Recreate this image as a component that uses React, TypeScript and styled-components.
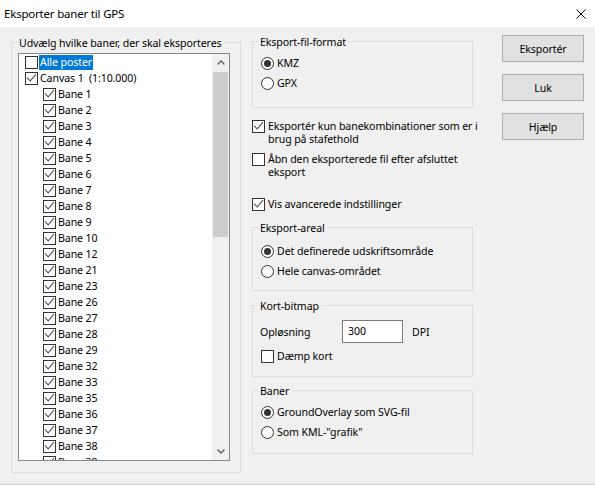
import React from 'react'
import styled, { createGlobalStyle } from 'styled-components'

const FONT = `'Noto Sans', 'Segoe UI', sans-serif`

const GlobalStyle = createGlobalStyle`
  html, body {
    margin: 0;
    padding: 0;
    background: #fff;
  }
  body {
    font-family: ${FONT};
    font-size: 10.6px;
    letter-spacing: -0.1px;
    color: #000;
  }
`

const Window = styled.div`
  width: 595px;
  height: 486px;
  display: flex;
  flex-direction: column;
  background: #fff;
  overflow: hidden;
`

const TitleBar = styled.div`
  height: 27px;
  flex: none;
  display: flex;
  align-items: center;
  justify-content: space-between;
  padding-left: 4px;
  box-sizing: border-box;
  background: #fff;
  font-size: 11.5px;
  letter-spacing: -0.2px;
`

const CloseButton = styled.div`
  width: 28px;
  height: 27px;
  display: flex;
  align-items: center;
  justify-content: center;
`

const Client = styled.div`
  height: 458px;
  box-sizing: border-box;
  display: flex;
  align-items: flex-start;
  padding-left: 11px;
  background: #f0f0f0;
  border-bottom: 1px solid #d2d2d2;
`

const Group = styled.div<{ $top: number; $height: number; $pad: string }>`
  position: relative;
  box-sizing: border-box;
  margin-top: ${({ $top }) => $top}px;
  height: ${({ $height }) => $height}px;
  padding: ${({ $pad }) => $pad};
  border: 1px solid #dcdcdc;
  display: flex;
  flex-direction: column;
`

const Caption = styled.span`
  position: absolute;
  top: -8px;
  left: 5px;
  padding: 0 2px;
  line-height: 16px;
  background: #f0f0f0;
  white-space: nowrap;
`

const LeftColumn = styled.div`
  width: 230px;
`

const MiddleColumn = styled.div`
  width: 221px;
  margin-left: 11px;
  display: flex;
  flex-direction: column;
`

const ButtonColumn = styled.div`
  margin-left: 29px;
  margin-top: 8px;
  display: flex;
  flex-direction: column;
  gap: 12px;
`

const Button = styled.div`
  width: 82px;
  height: 27px;
  box-sizing: border-box;
  border: 1px solid #adadad;
  background: #e1e1e1;
  display: flex;
  align-items: center;
  justify-content: center;
`

/* tree list */

const TreeList = styled.div`
  width: 212px;
  height: 408px;
  box-sizing: border-box;
  border: 1px solid #828790;
  background: #fff;
  display: flex;
`

const TreeItems = styled.div`
  flex: 1;
  overflow: hidden;
  display: flex;
  flex-direction: column;
`

const TreeRow = styled.div<{ $level: number }>`
  flex: none;
  height: 16px;
  display: flex;
  align-items: center;
  padding-left: ${({ $level }) => 6 + $level * 18}px;
`

const TreeLabel = styled.span<{ $selected?: boolean }>`
  margin-left: 1px;
  padding: 0 1px;
  line-height: 15px;
  white-space: pre;
  background: ${({ $selected }) => ($selected ? '#0078d7' : 'transparent')};
  color: ${({ $selected }) => ($selected ? '#fff' : '#000')};
`

const ScrollBar = styled.div`
  width: 17px;
  flex: none;
  background: #f0f0f0;
  display: flex;
  flex-direction: column;
`

const ScrollArrow = styled.div`
  height: 17px;
  flex: none;
  display: flex;
  align-items: center;
  justify-content: center;
`

const ScrollTrack = styled.div`
  flex: 1;
`

const ScrollThumb = styled.div`
  margin: 1px 1px 0;
  height: 165px;
  background: #cdcdcd;
`

/* controls */

const Box = styled.span`
  width: 13px;
  height: 13px;
  flex: none;
  box-sizing: border-box;
  border: 1px solid #333;
  background: #fff;
  display: flex;
`

const RadioCircle = styled.span<{ $on?: boolean }>`
  width: 13px;
  height: 13px;
  flex: none;
  box-sizing: border-box;
  border: 1px solid #333;
  border-radius: 50%;
  background: #fff;
  display: flex;
  align-items: center;
  justify-content: center;

  &::after {
    content: '';
    width: 7px;
    height: 7px;
    border-radius: 50%;
    background: ${({ $on }) => ($on ? '#333' : 'transparent')};
  }
`

const RadioRow = styled.div<{ $gap: number }>`
  height: 16px;
  display: flex;
  align-items: center;
  gap: 3px;
  white-space: nowrap;
  & + & {
    margin-top: ${({ $gap }) => $gap}px;
  }
`

const CheckOption = styled.div<{ $top: number }>`
  display: flex;
  align-items: flex-start;
  gap: 3px;
  margin-top: ${({ $top }) => $top}px;
  line-height: 13px;
  white-space: nowrap;
`

const FieldRow = styled.div`
  display: flex;
  align-items: center;
`

const FieldLabel = styled.span`
  width: 82px;
`

const TextInput = styled.div`
  width: 61px;
  height: 23px;
  box-sizing: border-box;
  border: 1px solid #7a7a7a;
  background: #fff;
  padding: 0 0 1px 5px;
  display: flex;
  align-items: center;
`

const Unit = styled.span`
  margin-left: 9px;
`

const InlineCheck = styled.div`
  display: flex;
  align-items: center;
  gap: 3px;
  margin: 6px 0 0 1px;
`

const Check: React.FC<{ checked?: boolean }> = ({ checked }) => (
  <Box>
    {checked && (
      <svg width="11" height="11" viewBox="0 0 11 11">
        <path d="M1 4.6 L4.2 7.9 L10 1.2" fill="none" stroke="#555" strokeWidth="1.1" />
      </svg>
    )}
  </Box>
)

const baneNumbers = [1, 2, 3, 4, 5, 6, 7, 8, 9, 10, 12, 21, 23, 26, 27, 28, 29, 32, 33, 35, 36, 37, 38, 39]

export default function App() {
  return (
    <>
      <GlobalStyle />
      <Window>
        <TitleBar>
          <span>Eksporter baner til GPS</span>
          <CloseButton>
            <svg width="10" height="10" viewBox="0 0 10 10">
              <path d="M0.5 0.5 L9.5 9.5 M9.5 0.5 L0.5 9.5" stroke="#000" strokeWidth="1" />
            </svg>
          </CloseButton>
        </TitleBar>
        <Client>
          <LeftColumn>
            <Group $top={15} $height={431} $pad="10px 0 0 6px">
              <Caption>Udvælg hvilke baner, der skal eksporteres</Caption>
              <TreeList>
                <TreeItems>
                  <TreeRow $level={0}>
                    <Check />
                    <TreeLabel $selected>Alle poster</TreeLabel>
                  </TreeRow>
                  <TreeRow $level={0}>
                    <Check checked />
                    <TreeLabel>{'Canvas 1  (1:10.000)'}</TreeLabel>
                  </TreeRow>
                  {baneNumbers.map(n => (
                    <TreeRow key={n} $level={1}>
                      <Check checked />
                      <TreeLabel>Bane {n}</TreeLabel>
                    </TreeRow>
                  ))}
                </TreeItems>
                <ScrollBar>
                  <ScrollArrow>
                    <svg width="8" height="5" viewBox="0 0 8 5">
                      <path d="M0.5 4.5 L4 1 L7.5 4.5" fill="none" stroke="#606060" strokeWidth="1.4" />
                    </svg>
                  </ScrollArrow>
                  <ScrollTrack>
                    <ScrollThumb />
                  </ScrollTrack>
                  <ScrollArrow>
                    <svg width="8" height="5" viewBox="0 0 8 5">
                      <path d="M0.5 0.5 L4 4 L7.5 0.5" fill="none" stroke="#606060" strokeWidth="1.4" />
                    </svg>
                  </ScrollArrow>
                </ScrollBar>
              </TreeList>
            </Group>
          </LeftColumn>

          <MiddleColumn>
            <Group $top={14} $height={67} $pad="13px 0 0 8px">
              <Caption>Eksport-fil-format</Caption>
              <RadioRow $gap={11}>
                <RadioCircle $on />
                <span>KMZ</span>
              </RadioRow>
              <RadioRow $gap={11}>
                <RadioCircle />
                <span>GPX</span>
              </RadioRow>
            </Group>

            <CheckOption $top={12}>
              <Check checked />
              <span>
                Eksportér kun banekombinationer som er i
                <br />
                brug på stafethold
              </span>
            </CheckOption>
            <CheckOption $top={7}>
              <Check />
              <span>
                Åbn den eksporterede fil efter afsluttet
                <br />
                eksport
              </span>
            </CheckOption>
            <CheckOption $top={19}>
              <Check checked />
              <span>Vis avancerede indstillinger</span>
            </CheckOption>

            <Group $top={16} $height={64} $pad="15px 0 0 8px">
              <Caption>Eksport-areal</Caption>
              <RadioRow $gap={6}>
                <RadioCircle $on />
                <span>Det definerede udskriftsområde</span>
              </RadioRow>
              <RadioRow $gap={6}>
                <RadioCircle />
                <span>Hele canvas-området</span>
              </RadioRow>
            </Group>

            <Group $top={14} $height={72} $pad="14px 0 0 7px">
              <Caption>Kort-bitmap</Caption>
              <FieldRow>
                <FieldLabel>Opløsning</FieldLabel>
                <TextInput>300</TextInput>
                <Unit>DPI</Unit>
              </FieldRow>
              <InlineCheck>
                <Check />
                <span>Dæmp kort</span>
              </InlineCheck>
            </Group>

            <Group $top={13} $height={64} $pad="13px 0 0 8px">
              <Caption>Baner</Caption>
              <RadioRow $gap={4}>
                <RadioCircle $on />
                <span>GroundOverlay som SVG-fil</span>
              </RadioRow>
              <RadioRow $gap={4}>
                <RadioCircle />
                <span>Som KML-"grafik"</span>
              </RadioRow>
            </Group>
          </MiddleColumn>

          <ButtonColumn>
            <Button>Eksportér</Button>
            <Button>Luk</Button>
            <Button>Hjælp</Button>
          </ButtonColumn>
        </Client>
      </Window>
    </>
  )
}
